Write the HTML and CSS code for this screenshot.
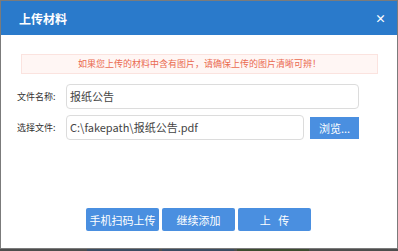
FILE: index.html
```html
<!DOCTYPE html>
<html lang="zh-CN">
<head>
  <meta charset="UTF-8" />
  <title>上传材料</title>
  <link rel="stylesheet" href="styles.css">
</head>
<body>
  <div class="dialog">
    <header class="dialog-head">
      <span class="dialog-title">上传材料</span>
      <span class="close-btn">&times;</span>
    </header>

    <div class="dialog-body">
      <div class="tip">如果您上传的材料中含有图片，请确保上传的图片清晰可辨！</div>

      <div class="form-row">
        <label class="form-label">文件名称:</label>
        <div class="form-input wide">报纸公告</div>
      </div>

      <div class="form-row second">
        <label class="form-label">选择文件:</label>
        <div class="form-input">C:\fakepath\报纸公告.pdf</div>
        <button class="browse-btn">浏览...</button>
      </div>
    </div>

    <div class="dialog-foot">
      <button class="btn">手机扫码上传</button>
      <button class="btn">继续添加</button>
      <button class="btn">上&nbsp;&nbsp;&nbsp;传</button>
    </div>
  </div>

  <!-- page behind the dialog -->
  <div class="backdrop-strip">
    <span class="seg blue"></span>
    <span class="seg blue"></span>
    <span class="seg green"></span>
  </div>
</body>
</html>
```

FILE: styles.css
```css
body {
  margin: 0;
  padding: 1px 1px 0 1px;
  background: #7b7b7b;
  font-family: "Noto Sans CJK SC", "Noto Sans", sans-serif;
  height: 251px;
  box-sizing: border-box;
  overflow: hidden;
}

.dialog {
  width: 396px;
  height: 247px;
  background: #fff;
  display: flex;
  flex-direction: column;
}

.dialog-head {
  height: 34px;
  background: #2a7acb;
  color: #fff;
  display: flex;
  align-items: center;
  justify-content: space-between;
  padding: 0 11px 0 18px;
}

.dialog-title {
  font-size: 12px;
  font-weight: bold;
}

.close-btn {
  font-size: 11px;
  font-weight: bold;
  line-height: 1;
}

.dialog-body {
  flex: 1;
  padding: 19px 19px 0 20px;
}

.tip {
  height: 20px;
  box-sizing: border-box;
  border: 1px solid #fbe3df;
  background: #fff6f4;
  color: #ea6a50;
  font-size: 9px;
  text-align: center;
  line-height: 18px;
}

.form-row {
  display: flex;
  align-items: center;
  margin: 10px 0 0 -4px;
}

.form-row.second {
  margin-top: 6px;
}

.form-label {
  width: 49px;
  font-size: 9px;
  color: #333;
}

.form-input {
  width: 238px;
  height: 25px;
  box-sizing: border-box;
  border: 1px solid #dcdcdc;
  border-radius: 4px;
  padding: 0 3px;
  font-size: 11px;
  line-height: 23px;
  color: #444;
}

.form-input.wide {
  width: 293px;
}

.browse-btn {
  margin-left: 6px;
  width: 49px;
  height: 22px;
  border: none;
  background: #4a8fe0;
  color: #fff;
  font-family: inherit;
  font-size: 11px;
  padding: 0;
}

.dialog-foot {
  display: flex;
  justify-content: center;
  gap: 3px;
  padding-bottom: 17px;
  padding-right: 1px;
}

.btn {
  width: 73px;
  height: 23px;
  border: none;
  border-radius: 2px;
  background: #4a8fe0;
  color: #fff;
  font-family: inherit;
  font-size: 11px;
  padding: 0;
}

.backdrop-strip {
  margin: 1px -1px 0 -1px;
  height: 3px;
  background: #4d4d4d;
  display: flex;
  gap: 3px;
  padding-left: 87px;
}

.seg {
  width: 72px;
  height: 3px;
}

.seg.blue {
  background: #3a4b60;
}

.seg.green {
  background: #3d4c2f;
}
```
